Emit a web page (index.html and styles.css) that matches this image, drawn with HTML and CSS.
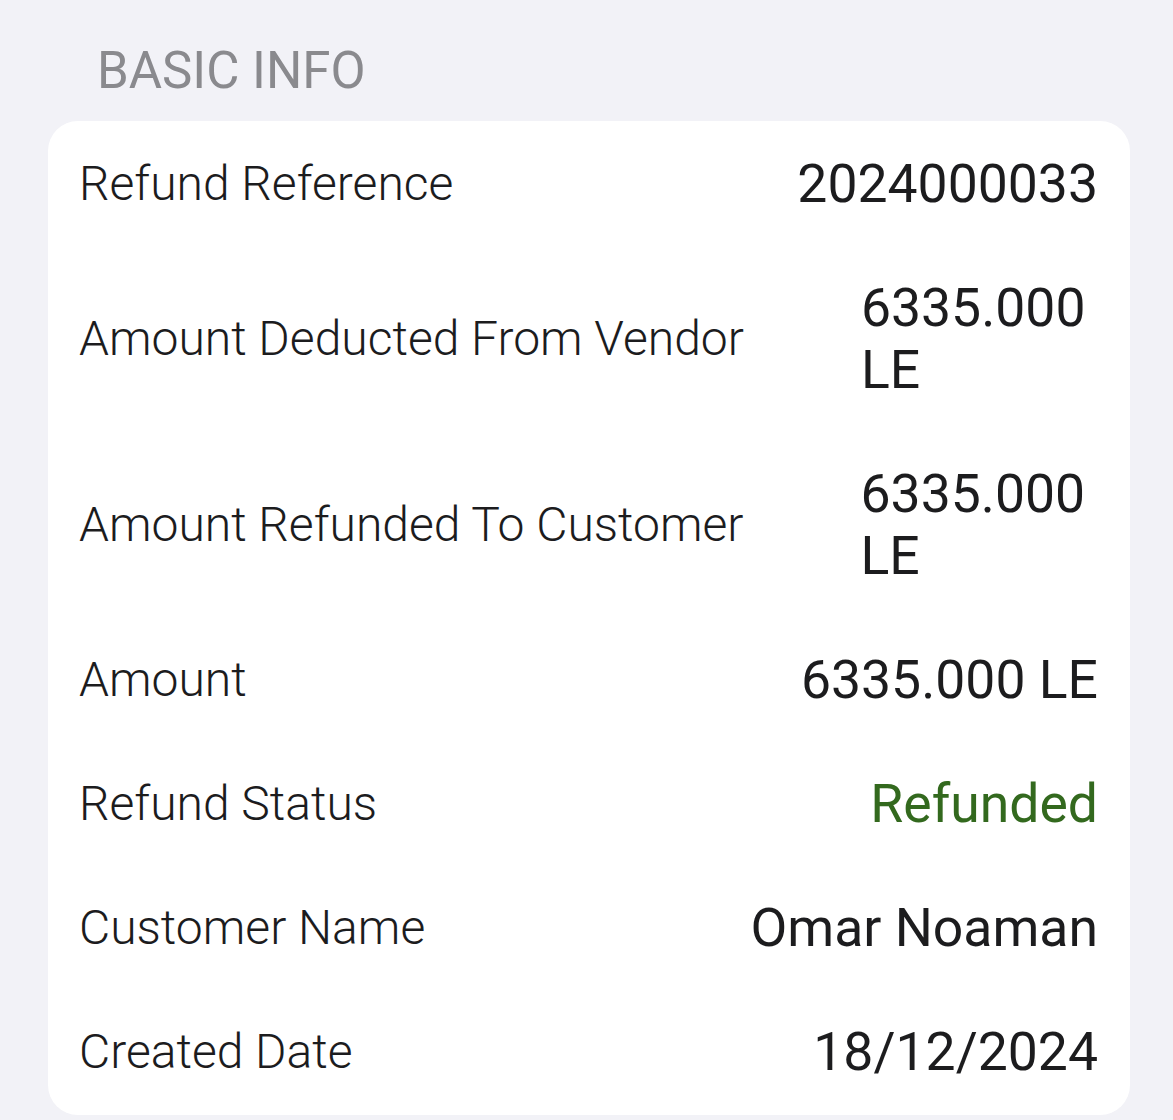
FILE: index.html
```html
<!DOCTYPE html>
<html lang="en">
<head>
    <meta charset="UTF-8">
    <meta name="viewport" content="width=device-width, initial-scale=1.0">
    <title>Refund Details</title>
    <link rel="stylesheet" href="styles.css">
</head>
<body>
    <div class="section">
        <h2 class="section-title">BASIC INFO</h2>
        <div class="card">
            <div class="row">
                <span class="label">Refund Reference</span>
                <span class="value">2024000033</span>
            </div>
            <div class="row">
                <span class="label">Amount Deducted From Vendor</span>
                <span class="value">6335.000 LE</span>
            </div>
            <div class="row">
                <span class="label">Amount Refunded To Customer</span>
                <span class="value">6335.000 LE</span>
            </div>
            <div class="row">
                <span class="label">Amount</span>
                <span class="value">6335.000 LE</span>
            </div>
            <div class="row">
                <span class="label">Refund Status</span>
                <span class="value status-refunded">Refunded</span>
            </div>
            <div class="row">
                <span class="label">Customer Name</span>
                <span class="value">Omar Noaman</span>
            </div>
            <div class="row">
                <span class="label">Created Date</span>
                <span class="value">18/12/2024</span>
            </div>
        </div>
    </div>
</body>
</html>
```

FILE: styles.css
```css
body {
    font-family: Roboto, "Noto Sans", sans-serif;
    background-color: #f2f2f7;
    margin: 0;
    padding: 0;
}
.section {
    padding: 0 43px 0 48px;
}
.section-title {
    margin: 0;
    padding: 40px 0 19px 49px;
    font-size: 51px;
    font-weight: 400;
    line-height: 62px;
    color: #8a8a8e;
}
.card {
    background-color: #fff;
    border-radius: 30px;
    padding: 1px 32px 1px 31px;
}
.row {
    display: flex;
    align-items: center;
    justify-content: space-between;
    padding: 31px 0;
}
.label {
    flex-shrink: 0;
    font-size: 48px;
    font-weight: 300;
    line-height: 62px;
    color: #1c1c1e;
}
.value {
    margin-left: 117px;
    font-size: 53.5px;
    font-weight: 400;
    line-height: 62px;
    color: #1c1c1e;
}
.status-refunded {
    color: #33691e;
}
```
